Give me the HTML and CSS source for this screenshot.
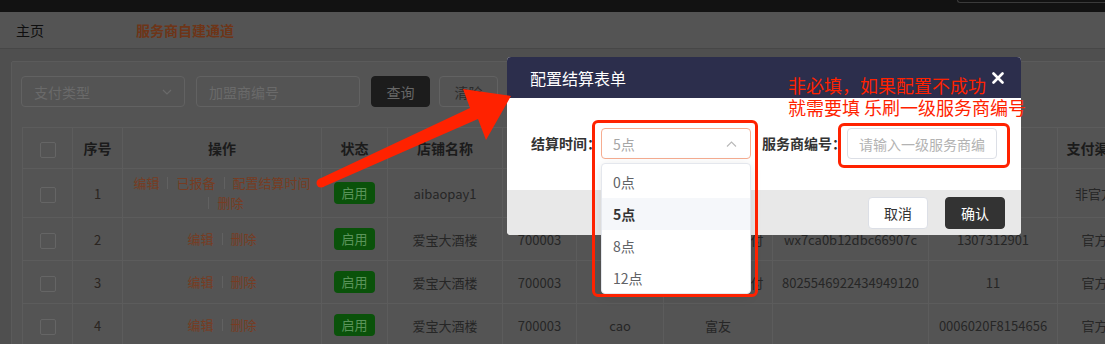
FILE: index.html
```html
<!DOCTYPE html>
<html lang="zh-CN">
<head>
  <meta charset="UTF-8">
  <title>服务商自建通道</title>
  <link rel="stylesheet" href="styles.css">
</head>
<body>

  <div class="topbar"><div class="top-search"></div></div>

  <div class="tabs">
    <span class="tab">主页</span>
    <span class="tab active">服务商自建通道</span>
  </div>

  <div class="main">
    <div class="card">
      <div class="filters">
        <div class="field">支付类型
          <svg width="10" height="6" viewBox="0 0 10 6"><path d="M1 1l4 4 4-4" fill="none" stroke="#6a6a6a" stroke-width="1.2"/></svg>
        </div>
        <div class="field">加盟商编号</div>
        <button class="btn btn-dark">查询</button>
        <button class="btn btn-plain">清除</button>
      </div>

      <table class="grid">
        <colgroup>
          <col style="width:50px"><col style="width:50px"><col style="width:199px"><col style="width:66px">
          <col style="width:115px"><col style="width:74px"><col style="width:87px"><col style="width:109px">
          <col style="width:156px"><col style="width:129px"><col style="width:74px">
        </colgroup>
        <thead>
          <tr>
            <th><span class="check"></span></th>
            <th>序号</th>
            <th>操作</th>
            <th>状态</th>
            <th>店铺名称</th>
            <th>商户编号</th>
            <th>商户名称</th>
            <th>支付方式</th>
            <th>AppID</th>
            <th>商户号ID</th>
            <th>支付渠道</th>
          </tr>
        </thead>
        <tbody>
          <tr class="row-tall">
            <td><span class="check"></span></td>
            <td class="num">1</td>
            <td>
              <div class="ops">
                <span class="op">编辑</span>
                <span class="op"><i class="sep"></i>已报备</span>
                <span class="op"><i class="sep"></i>配置结算时间</span>
                <span class="op"><i class="sep"></i>删除</span>
              </div>
            </td>
            <td><span class="badge">启用</span></td>
            <td>aibaopay1</td>
            <td>700003</td>
            <td>aibao</td>
            <td>富友</td>
            <td>wx7ca0b12dbc</td>
            <td>8</td>
            <td>非官方</td>
          </tr>
          <tr>
            <td><span class="check"></span></td>
            <td class="num">2</td>
            <td><div class="ops"><span class="op">编辑</span><span class="op"><i class="sep"></i>删除</span></div></td>
            <td><span class="badge">启用</span></td>
            <td>爱宝大酒楼</td>
            <td>700003</td>
            <td>cao</td>
            <td>微信公众号支付</td>
            <td>wx7ca0b12dbc66907c</td>
            <td>1307312901</td>
            <td>官方</td>
          </tr>
          <tr>
            <td><span class="check"></span></td>
            <td class="num">3</td>
            <td><div class="ops"><span class="op">编辑</span><span class="op"><i class="sep"></i>删除</span></div></td>
            <td><span class="badge">启用</span></td>
            <td>爱宝大酒楼</td>
            <td>700003</td>
            <td>cao</td>
            <td>支付宝扫码支付</td>
            <td>8025546922434949120</td>
            <td>11</td>
            <td>官方</td>
          </tr>
          <tr>
            <td><span class="check"></span></td>
            <td class="num">4</td>
            <td><div class="ops"><span class="op">编辑</span><span class="op"><i class="sep"></i>删除</span></div></td>
            <td><span class="badge">启用</span></td>
            <td>爱宝大酒楼</td>
            <td>700003</td>
            <td>cao</td>
            <td>富友</td>
            <td></td>
            <td>0006020F8154656</td>
            <td>官方</td>
          </tr>
        </tbody>
      </table>
    </div>
  </div>

  <!-- 配置结算弹窗 -->
  <div class="dialog">
    <div class="dialog-head">
      <span>配置结算表单</span>
      <svg width="12" height="12" viewBox="0 0 12 12"><path d="M1.5 1.5l9 9M10.5 1.5l-9 9" stroke="#fff" stroke-width="2.6" stroke-linecap="round"/></svg>
    </div>
    <div class="dialog-body">
      <label class="form-label">结算时间：</label>
      <div class="select-wrap">
        <div class="select">5点
          <svg width="11" height="6" viewBox="0 0 11 6"><path d="M1 5.5l4.5-4.5 4.5 4.5" fill="none" stroke="#b8b8b8" stroke-width="1.1"/></svg>
        </div>
        <ul class="dropdown">
          <li>0点</li>
          <li class="selected">5点</li>
          <li>8点</li>
          <li>12点</li>
        </ul>
      </div>
      <label class="form-label">服务商编号：</label>
      <input class="text-input" type="text" placeholder="请输入一级服务商编号">
    </div>
    <div class="dialog-foot">
      <button class="dbtn dbtn-cancel">取消</button>
      <button class="dbtn dbtn-ok">确认</button>
    </div>
  </div>

  <!-- 标注 -->
  <div class="mark mark-select"></div>
  <div class="mark mark-input"></div>
  <div class="note">非必填，如果配置不成功<br>就需要填 乐刷一级服务商编号</div>
  <svg class="arrow" width="1105" height="344" viewBox="0 0 1105 344">
    <path d="M319 179L470 108L463 89L511 96L486 140L478 119L323 187Z" fill="#ff2200"/>
    <circle cx="321" cy="183" r="4.5" fill="#ff2200"/>
  </svg>

</body>
</html>
```

FILE: styles.css
```css
body {
  margin: 0;
  width: 1105px;
  height: 344px;
  overflow: hidden;
  position: relative;
  background: #4f4f4f;
  font-family: "Noto Sans CJK SC", "Noto Sans", sans-serif;
}

.topbar {
  height: 12px;
  background: #121212;
  display: flex;
  justify-content: flex-end;
}

.top-search {
  width: 147px;
  height: 2px;
  border: 1px solid #3a3a3a;
  border-top: 0;
  border-right: 0;
  border-radius: 0 0 0 4px;
}

.tabs {
  height: 36px;
  background: #545454;
  border-bottom: 1px solid #474747;
  display: flex;
  align-items: center;
  padding-left: 16px;
  font-size: 14px;
}

.tab {
  width: 120px;
  color: #0e0e0e;
}

.tab.active {
  color: #6e3518;
  font-weight: bold;
}

.main {
  padding: 12px 0 0 11px;
}

.card {
  width: 1160px;
  height: 400px;
  background: #545454;
  border: 1px solid #5b5b5b;
  border-radius: 2px;
  padding: 14px 0 0 9px;
}

.filters {
  display: flex;
  height: 31px;
}

.field {
  width: 164px;
  box-sizing: border-box;
  border: 1px solid #626262;
  border-radius: 4px;
  display: flex;
  align-items: center;
  justify-content: space-between;
  padding: 0 12px;
  margin-right: 11px;
  color: #6a6a6a;
  font-size: 14px;
}

.btn {
  width: 59px;
  height: 31px;
  border-radius: 4px;
  font-family: inherit;
  font-size: 14px;
  margin-right: 9px;
}

.btn-dark {
  background: #1c1c1c;
  border: 1px solid #1c1c1c;
  color: #676767;
}

.btn-plain {
  background: transparent;
  border: 1px solid #626262;
  color: #2b2b2b;
}

.grid {
  margin: 20px 0 0 1px;
  border-collapse: collapse;
  table-layout: fixed;
  width: 1109px;
  font-size: 13px;
  color: #262626;
  text-align: center;
}

.grid th, .grid td {
  border: 1px solid #5c5c5c;
  padding: 0 4px;
  white-space: nowrap;
  overflow: hidden;
}

.grid th {
  height: 40px;
  font-size: 14px;
  color: #1b1b1b;
}

.grid td {
  height: 42px;
}

.grid .row-tall td {
  height: 48px;
}

.num {
  color: #2a2420;
}

.check {
  display: inline-block;
  width: 14px;
  height: 14px;
  border: 1px solid #656565;
  border-radius: 2px;
  vertical-align: middle;
}

.ops {
  display: flex;
  flex-wrap: wrap;
  justify-content: center;
  line-height: 20px;
  white-space: normal;
}

.op {
  color: #773c22;
  white-space: nowrap;
}

.sep {
  display: inline-block;
  width: 1px;
  height: 12px;
  background: #616161;
  margin: 0 8px;
  vertical-align: -1px;
}

.badge {
  display: inline-block;
  height: 22px;
  line-height: 22px;
  padding: 0 7px;
  border-radius: 4px;
  background: #0a520a;
  color: #5a945a;
  font-size: 13px;
}

/* 弹窗 */
.dialog {
  position: absolute;
  left: 507px;
  top: 57px;
  width: 514px;
  background: #fff;
  border-radius: 4px;
}

.dialog-head {
  height: 41px;
  background: #2c2e4c;
  border-radius: 4px 4px 0 0;
  display: flex;
  align-items: center;
  justify-content: space-between;
  padding: 0 17px 0 23px;
  color: #fff;
  font-size: 16px;
}

.dialog-body {
  height: 92px;
  box-sizing: border-box;
  padding: 30px 0 0 24px;
  display: flex;
  align-items: flex-start;
}

.form-label {
  font-size: 14px;
  font-weight: bold;
  color: #333;
  line-height: 31px;
}

.select-wrap {
  position: relative;
  width: 150px;
  margin-right: 11px;
}

.select {
  height: 31px;
  box-sizing: border-box;
  border: 1px solid #f6ad91;
  border-radius: 4px;
  display: flex;
  align-items: center;
  justify-content: space-between;
  padding: 0 13px 0 11px;
  color: #a6a6a6;
  font-size: 14px;
}

.dropdown {
  position: absolute;
  top: 35px;
  left: 0;
  width: 150px;
  height: 131px;
  box-sizing: border-box;
  margin: 0;
  padding: 2px 0 0;
  list-style: none;
  background: #fff;
  border: 1px solid #e4e7ed;
  border-radius: 4px;
  box-shadow: 0 2px 12px rgba(0, 0, 0, 0.1);
}

.dropdown li {
  height: 32px;
  line-height: 32px;
  padding-left: 11px;
  font-size: 14px;
  color: #606266;
}

.dropdown li.selected {
  background: #f5f7fa;
  color: #333;
  font-weight: bold;
}

.text-input {
  width: 150px;
  height: 31px;
  box-sizing: border-box;
  margin-left: 1px;
  border: 1px solid #dcdfe6;
  border-radius: 4px;
  padding: 0 11px;
  font-family: inherit;
  font-size: 14px;
  outline: none;
}

.text-input::placeholder {
  color: #b3b3b3;
}

.dialog-foot {
  height: 45px;
  background: #e8e8e8;
  border-radius: 0 0 4px 4px;
  display: flex;
  justify-content: flex-end;
  align-items: center;
  gap: 17px;
  padding-right: 16px;
}

.dbtn {
  width: 60px;
  height: 32px;
  border-radius: 4px;
  font-family: inherit;
  font-size: 14px;
}

.dbtn-cancel {
  background: #fff;
  border: 1px solid #dcdfe6;
  color: #333;
}

.dbtn-ok {
  background: #333;
  border: 1px solid #333;
  color: #fff;
}

/* 红色标注 */
.mark {
  position: absolute;
  border: 3px solid #ff2200;
  border-radius: 6px;
  box-sizing: border-box;
}

.mark-select {
  left: 592px;
  top: 120px;
  width: 166px;
  height: 177px;
}

.mark-input {
  left: 838px;
  top: 123px;
  width: 172px;
  height: 45px;
}

.note {
  position: absolute;
  left: 788px;
  top: 74px;
  color: #ff2200;
  font-size: 18px;
  line-height: 22px;
  white-space: nowrap;
}

.arrow {
  position: absolute;
  left: 0;
  top: 0;
  pointer-events: none;
}
```
